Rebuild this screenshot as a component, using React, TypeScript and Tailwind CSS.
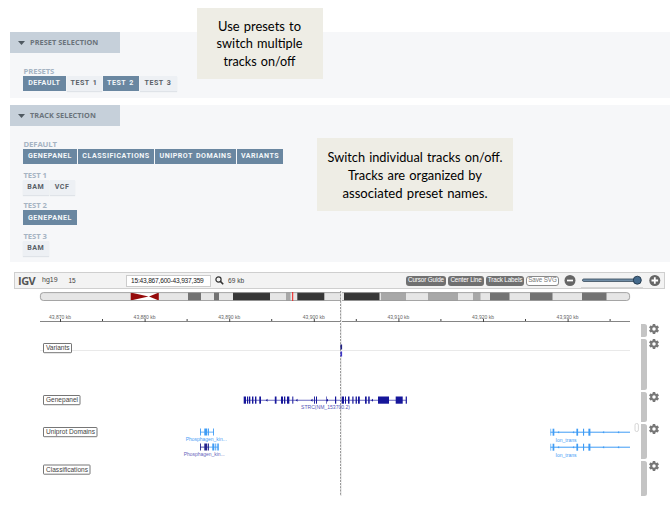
import React from "react";

const arial = "font-['Liberation_Sans',Arial,sans-serif]";

type Chip = { label: string; on?: boolean; w: string };

function ChipButton({ label, on, w }: Chip) {
  return (
    <button
      className={`flex h-[15px] items-center justify-center whitespace-nowrap font-['Roboto',sans-serif] text-[7.1px] font-bold tracking-[0.5px] [word-spacing:1px] ${w} ${
        on ? "bg-[#6a87a1] text-[#f4f7fa]" : "bg-[#edf0f4] text-[#596067] shadow-[0_1px_1px_#dfe3e8]"
      }`}
    >
      {label}
    </button>
  );
}

function Group({ title, chips }: { title: string; chips: Chip[] }) {
  return (
    <div className="flex h-[30.7px] flex-col">
      <div className="h-[10px] whitespace-nowrap pl-[0.5px] font-['Open_Sans',sans-serif] text-[7.7px] font-bold leading-[10px] tracking-[-0.1px] text-[#a6b4c3]">
        {title}
      </div>
      <div className="flex gap-px">
        {chips.map((c) => (
          <ChipButton key={c.label} {...c} />
        ))}
      </div>
    </div>
  );
}

function PanelHeader({ title }: { title: string }) {
  return (
    <div className="flex h-[21px] w-[110px] items-center bg-[#c6d0da] pl-[8px]">
      <svg width="7" height="4" viewBox="0 0 7 4">
        <path d="M0 0H7L3.5 4Z" fill="#4f5961" />
      </svg>
      <span className="ml-[5.5px] whitespace-nowrap font-['Open_Sans',sans-serif] text-[7.3px] font-bold tracking-[0.08px] text-[#6a737b]">
        {title}
      </span>
    </div>
  );
}

type NoteLine = { text: string; w: number };

function Note({ lines, className, pitch }: { lines: NoteLine[]; className: string; pitch: number }) {
  const width = Math.max(...lines.map((l) => l.w));
  return (
    <div className={`absolute flex items-center justify-center bg-[#eeede5] ${className}`}>
      <svg width={width} height={pitch * lines.length} className="overflow-visible">
        {lines.map((l, i) => (
          <text
            key={l.text}
            x={(width - l.w) / 2 - 0.5}
            y={pitch * i + 13.5}
            textLength={l.w}
            lengthAdjust="spacingAndGlyphs"
            className="fill-black font-['Lato',sans-serif] text-[14.3px] [word-spacing:1px]"
          >
            {l.text}
          </text>
        ))}
      </svg>
    </div>
  );
}

function Pill({ label, w, outline }: { label: string; w: string; outline?: boolean }) {
  return (
    <button
      className={`flex h-[10px] shrink-0 items-center justify-center whitespace-nowrap rounded-[3px] text-[6.3px] leading-none tracking-[-0.12px] ${w} ${
        outline ? "border border-[#8a8a8a] bg-white text-[#777]" : "bg-[#707070] text-white"
      }`}
    >
      {label}
    </button>
  );
}

function Toolbar() {
  return (
    <div className={`ml-[14px] flex h-[17px] w-[651px] items-center border border-[#cfcfcf] bg-[#f3f3f3] ${arial} text-[7px] text-[#444] *:shrink-0`}>
      <span className="w-[23.5px] pl-[3px] font-['Open_Sans',sans-serif] text-[11px] font-bold leading-none tracking-[-0.5px] text-[#555]">IGV</span>
      <span className="w-[26px] pl-[3.5px]">hg19</span>
      <span className="w-[61.5px] pl-[4px] text-[6.5px]">15</span>
      <div className="flex h-[12px] w-[85px] items-center whitespace-nowrap border border-[#ccc] bg-white pl-[4px] text-[6.6px] tracking-[-0.2px] text-[#222]">
        15:43,867,600-43,937,359
      </div>
      <svg className="ml-[4px]" width="9" height="9" viewBox="0 0 9 9" fill="none" stroke="#333" strokeWidth="1.2">
        <circle cx="3.5" cy="3.5" r="2.6" />
        <path d="M5.4 5.4L8.2 8.2" strokeWidth="1.6" />
      </svg>
      <span className="ml-[4px] w-[178px] text-[6.6px]">69 kb</span>
      <div className="flex gap-[2px]">
        <Pill label="Cursor Guide" w="w-[40px]" />
        <Pill label="Center Line" w="w-[36px]" />
        <Pill label="Track Labels" w="w-[38px]" />
        <Pill label="Save SVG" w="w-[33px]" outline />
      </div>
      <svg className="ml-[4.5px]" width="98" height="15" viewBox="0 0 98 15">
        <circle cx="6" cy="7.5" r="5.5" fill="#666" />
        <path d="M3 7.5H9" stroke="#fff" strokeWidth="1.7" />
        <path d="M17 14.5H79" stroke="#d5d5d5" />
        <rect x="18.5" y="6" width="56" height="2.4" rx="1.2" fill="#7895ae" stroke="#2b3f50" strokeWidth="0.8" />
        <circle cx="73.3" cy="7.2" r="4" fill="#446a8c" stroke="#22384b" strokeWidth="0.9" />
        <circle cx="90.8" cy="7.5" r="5.5" fill="#666" />
        <path d="M87.5 7.5H94.1M90.8 4.2V10.8" stroke="#fff" strokeWidth="1.8" />
      </svg>
    </div>
  );
}

const bands: [number, number, string][] = [
  [188, 13, "#737373"], [214, 5, "#737373"], [233, 37, "#373737"], [286, 4.5, "#a8a8a8"],
  [297.3, 27, "#373737"], [344, 35.5, "#373737"], [381, 25, "#a8a8a8"], [428, 30, "#a8a8a8"],
  [473, 7.5, "#a8a8a8"], [490, 19.5, "#737373"], [530, 22.5, "#737373"], [582, 24.5, "#737373"],
];

const ticks = ["43,870 kb", "43,880 kb", "43,890 kb", "43,900 kb", "43,910 kb", "43,920 kb", "43,930 kb"];

const exons: [number, number][] = [
  [243.7, 2.3], [247, 1.2], [249, 1.3], [252, 1.4], [255, 1.4], [259.3, 1.7], [274.8, 1.7],
  [281, 2], [284, 1.3], [287, 2.3], [292.3, 1], [314, 0.9], [316, 1], [326, 0.6], [335, 1.2],
  [341.7, 2.3], [345, 1], [348, 1.5], [352.3, 1.2], [355.6, 1.3], [358, 1.8], [365, 1.7],
  [368.2, 1.5], [378, 11], [395.7, 7], [405.7, 1.2],
];

const labels: [string, number, number][] = [
  ["Variants", 343.5, 28.5], ["Genepanel", 395.5, 37], ["Uniprot Domains", 427.5, 54], ["Classifications", 465, 47],
];

function IonTrans({ y }: { y: number }) {
  return (
    <g fill="#3f9cf5">
      <rect x="550.5" y={y - 0.5} width="79.5" height="1" />
      <rect x="550.3" y={y - 3.5} width="0.9" height="7" opacity="0.7" />
      <rect x="552.6" y={y - 3.5} width="1.7" height="7" />
      <rect x="576.4" y={y - 3.5} width="1.7" height="7" />
      <rect x="583" y={y - 3.5} width="1.1" height="7" />
      <rect x="588.4" y={y - 3.5} width="2" height="7" />
      {[558.5, 573.5, 603.5, 618.5].map((x) => (
        <path key={x} d={`M${x - 1} ${y}l1.6 -1.3v2.6z`} />
      ))}
      <text x="555.5" y={y + 9.3} textLength="21" lengthAdjust="spacingAndGlyphs" className="text-[5.8px]">Ion_trans</text>
    </g>
  );
}

function TrackCanvas() {
  return (
    <svg width="640" height="226" viewBox="0 290 640 226" className={`shrink-0 ${arial}`}>
      <clipPath id="chrom"><rect x="40" y="292.5" width="590" height="8" rx="3" /></clipPath>
      <g clipPath="url(#chrom)">
        <rect x="40" y="292" width="590" height="9" fill="#e6e6e6" />
        {bands.map(([x, w, c]) => <rect key={x} x={x} y="292" width={w} height="9" fill={c} />)}
        <rect x="130.7" y="292" width="28.3" height="9" fill="#fff" />
        <path d="M130.7 292.5L148.5 296.5L130.7 300.5Z" fill="#950b0b" />
        <path d="M158.8 292.5L149 296.5L158.8 300.5Z" fill="#950b0b" />
      </g>
      <rect x="40.4" y="292.6" width="589.2" height="7.9" rx="3" fill="none" stroke="#909090" strokeWidth="0.8" />
      <rect x="292.2" y="292" width="1" height="9" fill="#f01818" />

      <path d="M40 321.5H630" stroke="#858585" />
      {ticks.map((t, i) => (
        <g key={t} fill="#666">
          <text x={49 + i * 84.6} y="319" textLength="22" lengthAdjust="spacingAndGlyphs" className="text-[5.6px]">{t}</text>
          <rect x={60 + i * 84.6} y="319" width="1" height="3" fill="#444" />
          <rect x={102 + i * 84.6} y="319" width="1" height="2" fill="#444" />
        </g>
      ))}

      <path d="M40 350.5H630" stroke="#e9e9e9" />
      {labels.map(([t, y, w]) => (
        <g key={t}>
          <rect x="43.5" y={y} width={w - 0.5} height="9.2" rx="0.6" fill="#fff" stroke="#666" strokeWidth="0.9" />
          <text x="46" y={y + 6.9} textLength={w - 5} lengthAdjust="spacingAndGlyphs" fill="#444" className="text-[6.4px]">{t}</text>
        </g>
      ))}

      <path d="M341.5 291V496" stroke="#eeeeee" />
      <path d="M340.5 291V496" stroke="#999" strokeDasharray="2.2 1" />

      <g fill="#16169a">
        <rect x="244" y="399.8" width="162" height="0.8" fill="#4646b2" />
        {exons.map(([x, w]) => <rect key={x} x={x} y="396.5" width={w} height="7.2" />)}
        {[266.5, 296.5, 311.5, 327, 372].map((x) => <path key={x} d={`M${x - 0.8} 400.2l1.8 -1.5v3z`} />)}
        <text x="301" y="409.2" textLength="49" lengthAdjust="spacingAndGlyphs" fill="#5555b8" className="text-[5.8px]">STRC(NM_153700.2)</text>
      </g>

      <g fill="#3f9cf5">
        <rect x="200" y="431.7" width="14" height="0.8" />
        <rect x="200" y="428.5" width="0.9" height="7" />
        <rect x="204.3" y="428.5" width="3" height="7" />
        <rect x="208" y="428.5" width="0.9" height="7" />
        <rect x="213" y="428.5" width="0.9" height="7" />
        <text x="185.8" y="441.4" textLength="41" lengthAdjust="spacingAndGlyphs" className="text-[5.8px]">Phosphagen_kin...</text>
        <rect x="200" y="446.7" width="9" height="0.8" fill="#24248d" />
        <rect x="200" y="443.5" width="0.9" height="7" fill="#24248d" />
        <rect x="204.3" y="443.5" width="3" height="7" fill="#24248d" />
        <rect x="208" y="443.5" width="0.9" height="7" fill="#24248d" />
        <rect x="209" y="446.7" width="9" height="0.8" />
        <rect x="212.3" y="443.5" width="2" height="7" />
        <rect x="215.3" y="443.5" width="0.9" height="7" />
        <rect x="217.3" y="443.5" width="1.5" height="7" />
        <text x="183.7" y="456.4" textLength="41" lengthAdjust="spacingAndGlyphs" fill="#6464ba" className="text-[5.8px]">Phosphagen_kin...</text>
      </g>
      <IonTrans y={432.2} />
      <IonTrans y={447.2} />

      <rect x="340.4" y="344.5" width="1.7" height="5" fill="#202080" />
      <rect x="340.4" y="351.5" width="1.7" height="5" fill="#3c34c8" />
      <rect x="635" y="423.5" width="3.4" height="8" rx="1.6" fill="#fff" stroke="#ccc" strokeWidth="0.8" />
    </svg>
  );
}

function Gear() {
  return (
    <svg width="10" height="10" viewBox="2 2 20 20" fill="#777">
      <path d="M19.43 12.98c.04-.32.07-.64.07-.98s-.03-.66-.07-.98l2.11-1.65c.19-.15.24-.42.12-.64l-2-3.46c-.12-.22-.39-.3-.61-.22l-2.49 1c-.52-.4-1.08-.73-1.69-.98l-.38-2.65A.49.49 0 0 0 14 2h-4c-.25 0-.46.18-.49.42l-.38 2.65c-.61.25-1.17.59-1.69.98l-2.49-1c-.23-.09-.49 0-.61.22l-2 3.46c-.13.22-.07.49.12.64l2.11 1.65c-.04.32-.07.65-.07.98s.03.66.07.98l-2.11 1.65c-.19.15-.24.42-.12.64l2 3.46c.12.22.39.3.61.22l2.49-1c.52.4 1.08.73 1.69.98l.38 2.65c.03.24.24.42.49.42h4c.25 0 .46-.18.49-.42l.38-2.65c.61-.25 1.17-.59 1.69-.98l2.49 1c.23.09.49 0 .61-.22l2-3.46c.12-.22.07-.49-.12-.64l-2.11-1.65ZM12 15.5a3.5 3.5 0 1 1 0-7 3.5 3.5 0 0 1 0 7Z" />
    </svg>
  );
}

const handles = ["h-[12.5px]", "h-[51px]", "h-[30px]", "h-[35px]", "h-[35.5px]"];

export default function App() {
  return (
    <div className="relative flex h-[516px] w-[672px] flex-col overflow-hidden bg-white pt-[32px]">
      <section className="ml-[9.5px] h-[66px] w-[660px] bg-[#f6f7f9]">
        <PanelHeader title="PRESET SELECTION" />
        <div className="pl-[13.5px] pt-[13px]">
          <Group
            title="PRESETS"
            chips={[
              { label: "DEFAULT", on: true, w: "w-[42.5px]" },
              { label: "TEST 1", w: "w-[35px]" },
              { label: "TEST 2", on: true, w: "w-[36px]" },
              { label: "TEST 3", w: "w-[37px]" },
            ]}
          />
        </div>
      </section>
      <section className="ml-[9.5px] mt-[7px] h-[157px] w-[660px] bg-[#f6f7f9]">
        <PanelHeader title="TRACK SELECTION" />
        <div className="pl-[13.5px] pt-[13px]">
          <Group
            title="DEFAULT"
            chips={[
              { label: "GENEPANEL", on: true, w: "w-[54px]" },
              { label: "CLASSIFICATIONS", on: true, w: "w-[76px]" },
              { label: "UNIPROT DOMAINS", on: true, w: "w-[81px]" },
              { label: "VARIANTS", on: true, w: "w-[46px]" },
            ]}
          />
          <Group title="TEST 1" chips={[{ label: "BAM", w: "w-[25.5px]" }, { label: "VCF", w: "w-[25px]" }]} />
          <Group title="TEST 2" chips={[{ label: "GENEPANEL", on: true, w: "w-[54px]" }]} />
          <Group title="TEST 3" chips={[{ label: "BAM", w: "w-[25.5px]" }]} />
        </div>
      </section>
      <div className="h-[10px] shrink-0" />
      <Toolbar />
      <div className="mt-px flex">
        <TrackCanvas />
        <div className="flex flex-col gap-[2px] pl-[1px] pt-[34px]">
          {handles.map((h, i) => (
            <div key={i} className="flex gap-[2px]">
              <div className={`w-[6px] rounded-r-[2.5px] bg-[#c4c4c4] ${h}`} />
              <Gear />
            </div>
          ))}
        </div>
      </div>
      <Note
        className="left-[197px] top-[8px] h-[71px] w-[126px]"
        pitch={17.5}
        lines={[{ text: "Use presets to", w: 83 }, { text: "switch multiple", w: 86 }, { text: "tracks on/off", w: 72 }]}
      />
      <Note
        className="left-[317px] top-[138px] h-[73px] w-[196px]"
        pitch={18}
        lines={[{ text: "Switch individual tracks on/off.", w: 175 }, { text: "Tracks are organized by", w: 134 }, { text: "associated preset names.", w: 145 }]}
      />
    </div>
  );
}
